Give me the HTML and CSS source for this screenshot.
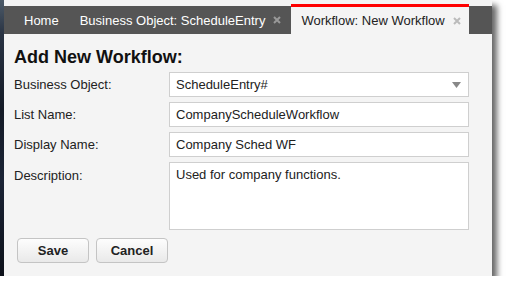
FILE: index.html
```html
<!DOCTYPE html>
<html lang="en">
<head>
    <meta charset="UTF-8">
    <title>Add New Workflow</title>
    <link rel="stylesheet" href="styles.css">
</head>
<body>

    <div class="desktop">
        <div class="window">

            <!-- Tab strip -->
            <nav class="tabbar">
                <div class="tab">Home</div>
                <div class="tab">
                    Business Object: ScheduleEntry
                    <svg class="close" width="8" height="8" viewBox="0 0 8 8"><path d="M1 1L7 7M7 1L1 7"/></svg>
                </div>
                <div class="tab active">
                    Workflow: New Workflow
                    <svg class="close" width="8" height="8" viewBox="0 0 8 8"><path d="M1 1L7 7M7 1L1 7"/></svg>
                </div>
            </nav>

            <div class="content">
                <h2>Add New Workflow:</h2>
                <form class="wf-form">
                    <label for="businessObject">Business Object:</label>
                    <div class="select">
                        <span>ScheduleEntry#</span>
                        <svg width="9" height="6" viewBox="0 0 9 6"><path d="M0 0H9L4.5 6Z"/></svg>
                    </div>

                    <label for="listName">List Name:</label>
                    <input type="text" id="listName" value="CompanyScheduleWorkflow">

                    <label for="displayName">Display Name:</label>
                    <input type="text" id="displayName" value="Company Sched WF">

                    <label for="description">Description:</label>
                    <textarea id="description">Used for company functions.</textarea>
                </form>
                <div class="buttons">
                    <button type="button">Save</button>
                    <button type="button">Cancel</button>
                </div>
            </div>

        </div>
    </div>

</body>
</html>
```

FILE: styles.css
```css
body {
    margin: 0;
    padding: 0;
    background-color: #fff;
    font-family: "Liberation Sans", Arial, sans-serif;
    font-size: 13px;
    color: #222;
}
:root {
    --panel: #f4f4f4;
    --tabbar: #555;
    --border: #cfcfcf;
    --accent: #f00;
}
.desktop {
    width: 488px;
    height: 276px;
    padding-left: 4px;
    background: linear-gradient(180deg, #4d5b69 0%, #2a3444 12%, #141a26 40%, #1b2436 65%, #0d111a 100%);
    box-shadow: 5px 5px 6px rgba(0,0,0,0.6);
}
.window {
    height: 100%;
    background-color: var(--panel);
    display: flex;
    flex-direction: column;
}
.tabbar {
    margin-top: 6px;
    height: 28px;
    background-color: var(--tabbar);
    display: flex;
    padding-left: 10px;
}
.tab {
    display: flex;
    align-items: center;
    gap: 8px;
    padding: 0 10px;
    color: #fff;
    white-space: nowrap;
}
.tab + .tab {
    padding-left: 11px;
}
.tab .close {
    stroke: #999;
    stroke-width: 2;
}
.tab.active {
    margin-top: -2px;
    border-top: 3px solid var(--accent);
    background-color: var(--panel);
    color: #222;
    padding-left: 10px;
    padding-right: 8px;
}
.tab.active .close {
    stroke: #bbb;
}
.content {
    padding: 12px 10px 0;
}
h2 {
    margin: 0 0 4px;
    font-size: 18px;
    line-height: 22px;
    color: #111;
}
.wf-form {
    display: grid;
    grid-template-columns: 155px 300px;
    row-gap: 5px;
    align-items: center;
}
.wf-form label {
    color: #222;
}
.wf-form label[for="description"] {
    align-self: start;
    padding-top: 6px;
}
.select,
.wf-form input[type="text"],
.wf-form textarea {
    box-sizing: border-box;
    width: 100%;
    height: 25px;
    margin: 0;
    padding: 0 6px;
    border: 1px solid var(--border);
    background-color: #fff;
    font-family: inherit;
    font-size: 13px;
    color: #222;
}
.select {
    display: flex;
    align-items: center;
    justify-content: space-between;
    padding-right: 7px;
}
.select svg {
    fill: #888;
}
.wf-form textarea {
    height: 68px;
    padding: 4px 6px;
    resize: none;
}
.buttons {
    display: flex;
    gap: 7px;
    margin: 8px 0 0 3px;
}
.buttons button {
    width: 72px;
    height: 25px;
    border: 1px solid #c4c4c4;
    border-radius: 4px;
    background: linear-gradient(#fdfdfd, #e9e9e9);
    font-family: inherit;
    font-size: 13px;
    font-weight: bold;
    color: #222;
}
```
